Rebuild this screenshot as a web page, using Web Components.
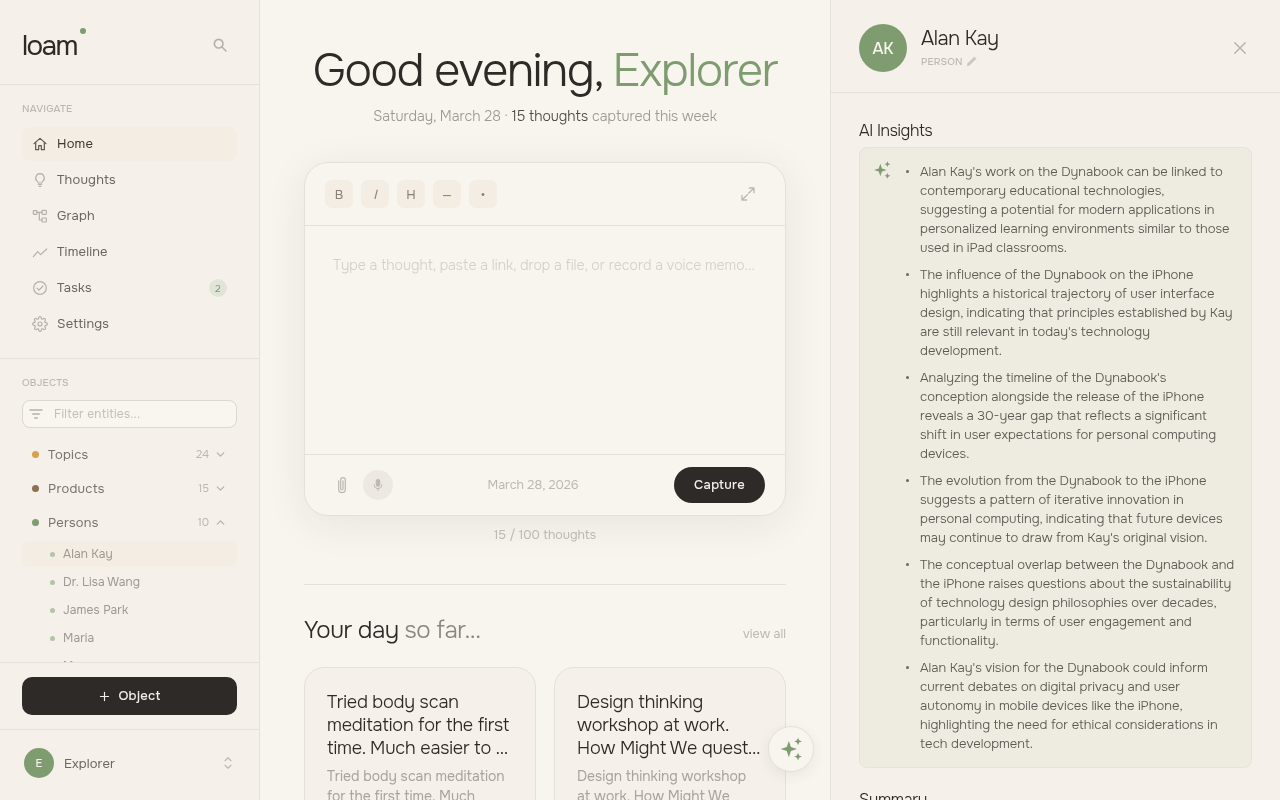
<!doctype html>
<html lang="en"><head><meta charset="utf-8"><title>loam</title>
<style>
html,body{margin:0;height:100%;overflow:hidden;background:#f8f5ef}
body{font-family:"Onest","Inter","Noto Sans",sans-serif;color:#2c2825}
</style></head>
<body><loam-app></loam-app>
<script>
const ICONS={
search:'<circle cx="10" cy="10" r="6.500"/><path d="M15 15l6 6"/>',
home:'<path d="M3 11.500L12 3.500l9 8"/><path d="M5.500 9.500V20.500h4.500v-6h4v6h4.500V9.500"/>',
bulb:'<path d="M9.500 18.500h5M10.500 21.500h3"/><path d="M12 2.500a6.500 6.500 0 0 0-4 11.600c.9.700 1.300 1.500 1.400 2.400h5.200c.1-.9.500-1.700 1.400-2.400A6.500 6.500 0 0 0 12 2.500z"/>',
graph:'<rect x="2" y="4" width="5.500" height="5.500" rx=".8"/><rect x="15" y="3.500" width="6.500" height="6" rx=".8"/><rect x="15" y="15" width="6.500" height="6" rx=".8"/><path d="M7.500 6.700H15M11 6.700V18h4"/>',
trend:'<path d="M2 19l6.500-7.500 4.500 4.500L22 7.500"/>',
check:'<circle cx="12" cy="12" r="9.500"/><path d="M7.500 12.300l3 3 6-6.300"/>',
gear:'<circle cx="12" cy="12" r="3"/><path d="M19.400 15a1.650 1.650 0 0 0 .33 1.820l.06.06a2 2 0 1 1-2.830 2.830l-.06-.06a1.650 1.650 0 0 0-2.820 1.170V21a2 2 0 1 1-4 0v-.09a1.650 1.650 0 0 0-2.820-1.170l-.06.06a2 2 0 1 1-2.830-2.830l.06-.06A1.650 1.650 0 0 0 3.090 14H3a2 2 0 1 1 0-4h.09a1.650 1.650 0 0 0 1.170-2.820l-.06-.06a2 2 0 1 1 2.830-2.830l.06.06A1.650 1.650 0 0 0 9.910 3.090V3a2 2 0 1 1 4 0v.09a1.650 1.650 0 0 0 2.820 1.170l.06-.06a2 2 0 1 1 2.830 2.830l-.06.06A1.650 1.650 0 0 0 20.910 10H21a2 2 0 1 1 0 4h-.09a1.650 1.650 0 0 0-1.510 1z"/>',
filter:'<path d="M3 6h18M7 12h10M10 18h4"/>',
down:'<path d="M6 9l6 6 6-6"/>',
up:'<path d="M6 15l6-6 6 6"/>',
updown:'<path d="M8 9l4-4 4 4M8 15l4 4 4-4"/>',
plus:'<path d="M12 4.500v15M4.500 12h15"/>',
expand:'<path d="M14 3h7v7M21 3l-8 8M10 21H3v-7M3 21l8-8"/>',
clip:'<path d="M8 7v10a4 4 0 0 0 8 0V6a2.800 2.800 0 0 0-5.600 0v10.500a1.400 1.400 0 0 0 2.800 0V7"/>',
mic:'<rect x="9" y="2.500" width="6" height="11.500" rx="3" fill="currentColor"/><path d="M5.500 11.500a6.500 6.500 0 0 0 13 0M12 18v3.500"/>',
close:'<path d="M5 5l14 14M19 5L5 19"/>',
pencil:'<path d="M4 20l1-4L16 5l3 3L8 19z" fill="currentColor"/>'
};
const SPARK='<path d="M10 4.500l1.900 5.600L17.500 12l-5.600 1.900L10 19.500l-1.900-5.600L2.500 12l5.600-1.900z"/><path d="M18.500 1.500l1 2.500 2.500 1-2.500 1-1 2.500-1-2.500-2.500-1 2.500-1z"/><path d="M18.500 15.500l1 2.500 2.500 1-2.500 1-1 2.500-1-2.500-2.500-1 2.500-1z"/>';

function def(name,css,html){
  customElements.define(name,class extends HTMLElement{
    connectedCallback(){
      if(this.shadowRoot)return;
      const r=this.attachShadow({mode:'open'});
      const h=typeof html==='function'?html(this):html;
      r.innerHTML='<style>'+css+'</style>'+h;
    }
  });
}

def('loam-icon',`:host{display:inline-flex;flex:none;line-height:0}svg{display:block;width:var(--s,16px);height:var(--s,16px);fill:none;stroke:currentColor;stroke-width:var(--w,1.6);stroke-linecap:round;stroke-linejoin:round}`,
 el=>`<svg viewBox="0 0 24 24" aria-hidden="true">${ICONS[el.getAttribute('name')]||''}</svg>`);

def('loam-spark',`:host{display:inline-flex;flex:none;line-height:0}svg{display:block;width:var(--s,18px);height:var(--s,18px);fill:#7d9b6e}`,
 `<svg viewBox="0 0 24 24" aria-hidden="true">${SPARK}</svg>`);

def('nav-item',`:host{display:flex;align-items:center;height:34px;margin-bottom:2px;padding:0 10px 0 9.500px;gap:9.500px;border-radius:8px;font-size:13px;font-weight:400;letter-spacing:.2px;color:#6b6660}
 :host([active]){background:#f3ede3;color:#3c3834}
 loam-icon{--s:16px;--w:1.800;color:#b5b1a9}
 :host([active]) loam-icon{color:#5c5852}
 .t{flex:1;margin-bottom:2px}
 .b{width:18px;height:18px;border-radius:50%;background:#e1e5d8;color:#83996f;font-size:10px;display:flex;align-items:center;justify-content:center}`,
 el=>`<loam-icon name="${el.getAttribute('icon')}"></loam-icon><span class="t"><slot></slot></span>${el.hasAttribute('badge')?`<span class="b">${el.getAttribute('badge')}</span>`:''}`);

def('obj-group',`:host{display:flex;align-items:center;height:34px;padding:0 10px;font-size:13px;letter-spacing:.25px;color:#78736c}
 .d{width:7px;height:7px;border-radius:50%;background:var(--c);margin:0 9px 0 0}
 .t{flex:1}.n{font-size:11px;letter-spacing:0;color:#bdb9b1;margin-right:5px}
 loam-icon{--s:13px;--w:2.200;color:#b5b1a9}`,
 el=>`<span class="d" style="--c:${el.getAttribute('color')}"></span><span class="t"><slot></slot></span><span class="n">${el.getAttribute('count')}</span><loam-icon name="${el.hasAttribute('open')?'up':'down'}"></loam-icon>`);

def('obj-child',`:host{display:flex;align-items:center;height:26px;margin-bottom:2px;padding-left:28px;gap:8px;border-radius:8px;font-size:12px;letter-spacing:.12px;color:#9d9992}
 :host([active]){background:#f3ede3;margin-top:2px}
 .d{width:5px;height:5px;border-radius:50%;background:#b4c5a6}`,
 `<span class="d"></span><slot></slot>`);

def('loam-sidebar',`:host{display:flex;flex-direction:column;min-height:0;height:100%;background:#f5f1ea;border-right:1px solid #e6e1d6;box-sizing:border-box;overflow:hidden}
 header{display:flex;align-items:center;justify-content:space-between;height:84px;flex:none;box-sizing:content-box;padding:0 31px 0 22px;border-bottom:1px solid #e6e1d6}
 .bar{display:flex;align-items:center;justify-content:space-between;width:100%;padding-top:6px}
 .logo{position:relative;margin-top:2px;font-size:28px;font-weight:400;letter-spacing:-1.600px;color:#2c2825;line-height:1}
 .logo i{position:absolute;right:-9px;top:-4px;width:6px;height:6px;border-radius:50%;background:#7d9b6e}
 header loam-icon{--s:16px;--w:2.400;color:#b5b1a9}
 .lab{font-size:10px;font-weight:500;letter-spacing:.2px;color:#bdb9b1;line-height:13px}
 nav{flex:none;height:274px;box-sizing:border-box;padding:17px 22px 0;border-bottom:1px solid #e6e1d6}
 nav .lab{margin-bottom:12px}
 .objs{flex:1;min-height:0;overflow:hidden;padding:17px 22px 0}
 .filter{display:flex;align-items:center;gap:10px;height:28px;box-sizing:border-box;margin:11px 0 9px;padding:0 5px;border:1px solid #dcd8cd;border-radius:8px;background:#f9f6f0;font-size:12px;letter-spacing:.25px;color:#c2bfb7}
 .filter loam-icon{--s:16px;--w:2;color:#b5b1a9}
 .act{flex:none;height:68px;box-sizing:border-box;padding:14px 22px;border-top:1px solid #e6e1d6;border-bottom:1px solid #e6e1d6}
 .new{display:flex;align-items:center;justify-content:center;gap:7px;height:38px;border-radius:10px;background:#2c2825;color:#f3efe8;font-size:13px;font-weight:500;letter-spacing:.2px}
 .new span{margin-bottom:2px}
 .new loam-icon{--s:13px;--w:2.200}
 .user{flex:none;height:70px;box-sizing:border-box;display:flex;align-items:center;padding:0 24px 4px;gap:10px;font-size:13px;letter-spacing:.1px;color:#6b6660}
 .av{width:30px;height:30px;border-radius:50%;background:#7d9b6e;color:#f5f1ea;display:flex;align-items:center;justify-content:center;font-size:11px;font-weight:500;letter-spacing:0}
 .user span{flex:1}.user loam-icon{--s:18px;--w:1.500;color:#bdb9b1;margin-right:-2px}`,
 `<header><div class="bar"><div class="logo">loam<i></i></div><loam-icon name="search"></loam-icon></div></header>
 <nav><div class="lab">NAVIGATE</div>
  <nav-item icon="home" active>Home</nav-item><nav-item icon="bulb">Thoughts</nav-item><nav-item icon="graph">Graph</nav-item><nav-item icon="trend">Timeline</nav-item><nav-item icon="check" badge="2">Tasks</nav-item><nav-item icon="gear">Settings</nav-item>
 </nav>
 <div class="objs"><div class="lab">OBJECTS</div>
  <div class="filter"><loam-icon name="filter"></loam-icon>Filter entities...</div>
  <obj-group color="#d8a04a" count="24">Topics</obj-group>
  <obj-group color="#8c6f4e" count="15">Products</obj-group>
  <obj-group color="#7d9b6e" count="10" open>Persons</obj-group>
  <obj-child active>Alan Kay</obj-child><obj-child>Dr. Lisa Wang</obj-child><obj-child>James Park</obj-child><obj-child>Maria</obj-child><obj-child>Marcus</obj-child>
 </div>
 <div class="act"><div class="new"><loam-icon name="plus"></loam-icon><span>Object</span></div></div>
 <div class="user"><div class="av">E</div><span>Explorer</span><loam-icon name="updown"></loam-icon></div>`);

def('fmt-btn',`:host{display:flex;align-items:center;justify-content:center;width:28px;height:28px;border-radius:7px;background:#f3ede3;color:#85817a;font-size:13px;font-weight:400}`,`<slot></slot>`);

def('capture-card',`:host{display:flex;flex-direction:column;height:354px;box-sizing:border-box;background:#f8f5ef;border:1px solid #e6e1d6;border-radius:24px;box-shadow:0 8px 40px rgba(44,40,37,.08)}
 .tb{flex:none;display:flex;align-items:center;gap:8px;height:63px;box-sizing:border-box;padding:0 29px 0 20px;border-bottom:1px solid #e6e1d6}
 .tb loam-icon{margin-left:auto;--s:16px;--w:2;color:#bdb9b1}
 .body{flex:1;padding:29px 28px 0;font-size:14px;line-height:20px;color:#d4d1ca;font-weight:300;white-space:nowrap}
 .ft{flex:none;height:61px;box-sizing:border-box;display:flex;align-items:center;padding:0 20px;border-top:1px solid #e6e1d6}
 .clip{--s:20px;--w:1.500;color:#bdb9b1;margin-left:7px}
 .mic{width:30px;height:30px;border-radius:50%;background:#ede9e2;display:flex;align-items:center;justify-content:center;margin-left:11px;color:#bdb9b1}
 .mic loam-icon{--s:14px;--w:1.800}
 .date{flex:1;text-align:center;font-size:12.500px;color:#bdb9b1;margin-left:-1px}
 .cap{height:34px;padding-bottom:2px;width:91px;border-radius:18px;background:#2c2825;color:#f3efe8;font-size:13px;font-weight:500;letter-spacing:.3px;display:flex;align-items:center;justify-content:center}`,
 `<div class="tb"><fmt-btn>B</fmt-btn><fmt-btn><em>I</em></fmt-btn><fmt-btn>H</fmt-btn><fmt-btn>—</fmt-btn><fmt-btn>•</fmt-btn><loam-icon name="expand"></loam-icon></div>
 <div class="body">Type a thought, paste a link, drop a file, or record a voice memo...</div>
 <div class="ft"><loam-icon class="clip" name="clip"></loam-icon><div class="mic"><loam-icon name="mic"></loam-icon></div><div class="date">March 28, 2026</div><div class="cap">Capture</div></div>`);

def('day-card',`:host{display:block;flex:1 1 0;min-width:0;box-sizing:border-box;height:170px;padding:23px 22px 0;border:1px solid #e6e1d6;border-radius:20px;background:#f5f1ea;overflow:hidden}
 .h{font-size:18px;line-height:23px;font-weight:300;letter-spacing:-.18px;color:#2c2825;white-space:nowrap}
 .p{margin-top:6px;font-size:14px;line-height:20px;color:#a8a49d;white-space:nowrap}`,
 el=>`<div class="h"><slot name="h"></slot></div><div class="p"><slot name="p"></slot></div>`);

def('loam-main',`:host{display:block;position:relative;height:100%;overflow:hidden;background:#f8f5ef}
 .col{width:482px;margin:0 auto;padding-top:45px}
 h1{margin:0;text-align:center;font-size:46px;line-height:52px;font-weight:300;letter-spacing:-1.420px;color:#2c2825;white-space:nowrap}
 h1 span{color:#7d9b6e}
 .sub{margin:7px 0 0;text-align:center;font-size:14px;line-height:24px;font-weight:300;color:#9d9992}
 .sub b{font-weight:300;color:#4c4843}
 capture-card{margin-top:34px}
 .cnt{margin-top:11px;text-align:center;font-size:12.500px;line-height:16px;color:#bdb9b1}
 hr{border:0;border-top:1px solid #e6e1d6;margin:41px 0 28px}
 .head{display:flex;align-items:baseline;justify-content:space-between;height:54px}
 .head h2{margin:0;font-size:24px;line-height:34px;font-weight:300;letter-spacing:-.48px;color:#2c2825}
 .head h2 span{color:#8a867f}
 .head a{font-size:12.500px;color:#bdb9b1}
 .cards{display:flex;gap:18px}
 loam-fab{position:absolute;left:508px;top:726px}`,
 `<div class="col"><h1>Good evening, <span>Explorer</span></h1>
 <p class="sub">Saturday, March 28 · <b>15 thoughts</b> captured this week</p>
 <capture-card></capture-card>
 <div class="cnt">15 / 100 thoughts</div><hr>
 <div class="head"><h2>Your day <span>so far...</span></h2><a>view all</a></div>
 <div class="cards">
  <day-card><span slot="h">Tried body scan<br>meditation for the first<br>time. Much easier to …</span><span slot="p">Tried body scan meditation<br>for the first time. Much</span></day-card>
  <day-card><span slot="h">Design thinking<br>workshop at work.<br>How Might We quest…</span><span slot="p">Design thinking workshop<br>at work. How Might We</span></day-card>
 </div></div><loam-fab></loam-fab>`);

def('loam-fab',`:host{display:flex;align-items:center;justify-content:center;width:46px;height:46px;box-sizing:border-box;border-radius:50%;background:#f8f5ef;border:1px solid #e6e1d6;box-shadow:0 4px 14px rgba(44,40,37,.07)}
 loam-spark{--s:26px}`,`<loam-spark></loam-spark>`);

def('insight-item',`:host{display:block;position:relative;margin-bottom:8px;font-size:13px;font-weight:300;line-height:19px;color:#5c5852;white-space:nowrap}
 :host(:last-child){margin-bottom:0}
 :host::before{content:"";position:absolute;left:-14px;top:8px;width:3px;height:3px;border-radius:50%;background:#6b6660}`,`<slot></slot>`);

def('loam-detail',`:host{display:block;height:100%;box-sizing:border-box;background:#f5f1ea;border-left:1px solid #e6e1d6;overflow:hidden}
 header{display:flex;align-items:flex-start;height:93px;box-sizing:border-box;padding:24px 31px 0 28px;border-bottom:1px solid #e6e1d6;gap:14px}
 .av{width:48px;height:48px;border-radius:50%;background:#7d9b6e;color:#f9f6f0;display:flex;align-items:center;justify-content:center;font-size:16px;font-weight:500}
 .who{flex:1}
 .nm{font-size:20px;line-height:26px;font-weight:300;letter-spacing:-.4px;color:#2c2825;margin-top:2px}
 .ty{display:flex;align-items:center;gap:2px;font-size:10px;font-weight:500;letter-spacing:.1px;line-height:13px;color:#bdb9b1;margin-top:2px}
 .ty loam-icon{--s:14px;--w:1;color:#cbc8c0}
 header>loam-icon{--s:18px;--w:1.800;color:#b5b1a9;margin-top:15px}
 h3{margin:0;font-size:16px;line-height:22px;font-weight:300;letter-spacing:-.32px;color:#2c2825}
 .in{padding:27px 28px 0}
 .box{position:relative;display:flex;margin-top:5px;width:393px;height:621px;box-sizing:border-box;padding:14px 0 0 60px;background:#eeebe0;border:1px solid #e6e3d8;border-radius:8px}
 .box loam-spark{position:absolute;left:12px;top:12px;--s:20px}
 .sum{margin-top:21px}`,
 `<header><div class="av">AK</div><div class="who"><div class="nm">Alan Kay</div><div class="ty">PERSON <loam-icon name="pencil"></loam-icon></div></div><loam-icon name="close"></loam-icon></header>
 <div class="in"><h3>AI Insights</h3>
 <div class="box"><loam-spark></loam-spark><div>
 <insight-item>Alan Kay's work on the Dynabook can be linked to<br>contemporary educational technologies,<br>suggesting a potential for modern applications in<br>personalized learning environments similar to those<br>used in iPad classrooms.</insight-item>
 <insight-item>The influence of the Dynabook on the iPhone<br>highlights a historical trajectory of user interface<br>design, indicating that principles established by Kay<br>are still relevant in today's technology<br>development.</insight-item>
 <insight-item>Analyzing the timeline of the Dynabook's<br>conception alongside the release of the iPhone<br>reveals a 30-year gap that reflects a significant<br>shift in user expectations for personal computing<br>devices.</insight-item>
 <insight-item>The evolution from the Dynabook to the iPhone<br>suggests a pattern of iterative innovation in<br>personal computing, indicating that future devices<br>may continue to draw from Kay's original vision.</insight-item>
 <insight-item>The conceptual overlap between the Dynabook and<br>the iPhone raises questions about the sustainability<br>of technology design philosophies over decades,<br>particularly in terms of user engagement and<br>functionality.</insight-item>
 <insight-item>Alan Kay's vision for the Dynabook could inform<br>current debates on digital privacy and user<br>autonomy in mobile devices like the iPhone,<br>highlighting the need for ethical considerations in<br>tech development.</insight-item>
 </div></div>
 <h3 class="sum">Summary</h3></div>`);

def('loam-app',`:host{display:grid;grid-template-columns:260px 570px 450px;width:1280px;height:800px;overflow:hidden;opacity:.99;will-change:transform}`,
 `<loam-sidebar></loam-sidebar><loam-main></loam-main><loam-detail></loam-detail>`);
</script></body></html>
